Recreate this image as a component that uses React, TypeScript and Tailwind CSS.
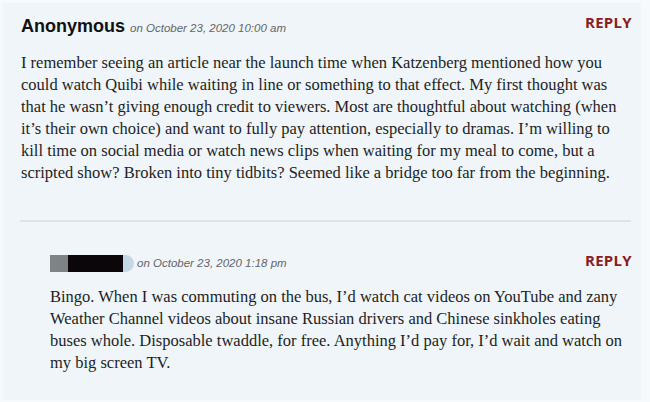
export default function App() {
  const first = [
    "I remember seeing an article near the launch time when Katzenberg mentioned how you",
    "could watch Quibi while waiting in line or something to that effect. My first thought was",
    "that he wasn\u2019t giving enough credit to viewers. Most are thoughtful about watching (when",
    "it\u2019s their own choice) and want to fully pay attention, especially to dramas. I\u2019m willing to",
    "kill time on social media or watch news clips when waiting for my meal to come, but a",
    "scripted show? Broken into tiny tidbits? Seemed like a bridge too far from the beginning.",
  ];
  const second = [
    "Bingo. When I was commuting on the bus, I\u2019d watch cat videos on YouTube and zany",
    "Weather Channel videos about insane Russian drivers and Chinese sinkholes eating",
    "buses whole. Disposable twaddle, for free. Anything I\u2019d pay for, I\u2019d wait and watch on",
    "my big screen TV.",
  ];

  return (
    <div className="w-[650px] h-[402px] bg-[#f7fafc] pl-[3px] pt-[3px] overflow-hidden">
      <div className="w-[638px] h-[397px] bg-[#eff5f9]">
        {/* Top comment */}
        <div className="pl-[18px] pr-[9px] pt-[10px]">
          <div className="flex items-center justify-between">
            <div className="flex items-baseline gap-[5px] font-['Liberation_Sans',sans-serif]">
              <span className="text-[18px] font-bold text-[#111]">Anonymous</span>
              <span className="text-[11.5px] italic text-[#666]">on October 23, 2020 10:00 am</span>
            </div>
            <span className="-mt-[9px] text-[15px] font-bold tracking-[0.3px] text-[#8b1c22] font-['Open_Sans',sans-serif]">REPLY</span>
          </div>
          <div className="mt-[12px] font-['Liberation_Serif',serif] text-[16.5px] leading-[22px] text-[#1e1e1e]">
            {first.map((l, i) => (
              <div key={i} className="whitespace-nowrap">{l}</div>
            ))}
          </div>
        </div>

        <div className="ml-[17px] mr-[10px] mt-[36px] h-[2px] bg-[#dde3e8]" />

        {/* Reply comment */}
        <div className="pl-[47px] pr-[9px] pt-[33px]">
          <div className="flex items-center justify-between">
            <div className="flex items-center">
              <div className="flex items-center h-[17px]">
                <div className="w-[18px] h-full bg-[#7e8386]" />
                <div className="w-[55px] h-full bg-[#0b0609]" />
                <div className="w-[11px] h-full bg-[#c3d7e4] rounded-r-full" />
              </div>
              <span className="ml-[3px] text-[11.5px] italic text-[#666] font-['Liberation_Sans',sans-serif]">on October 23, 2020 1:18 pm</span>
            </div>
            <span className="-mt-[6px] text-[15px] font-bold tracking-[0.3px] text-[#8b1c22] font-['Open_Sans',sans-serif]">REPLY</span>
          </div>
          <div className="mt-[14px] font-['Liberation_Serif',serif] text-[16.5px] leading-[22px] text-[#1e1e1e]">
            {second.map((l, i) => (
              <div key={i} className="whitespace-nowrap">{l}</div>
            ))}
          </div>
        </div>
      </div>
    </div>
  );
}
